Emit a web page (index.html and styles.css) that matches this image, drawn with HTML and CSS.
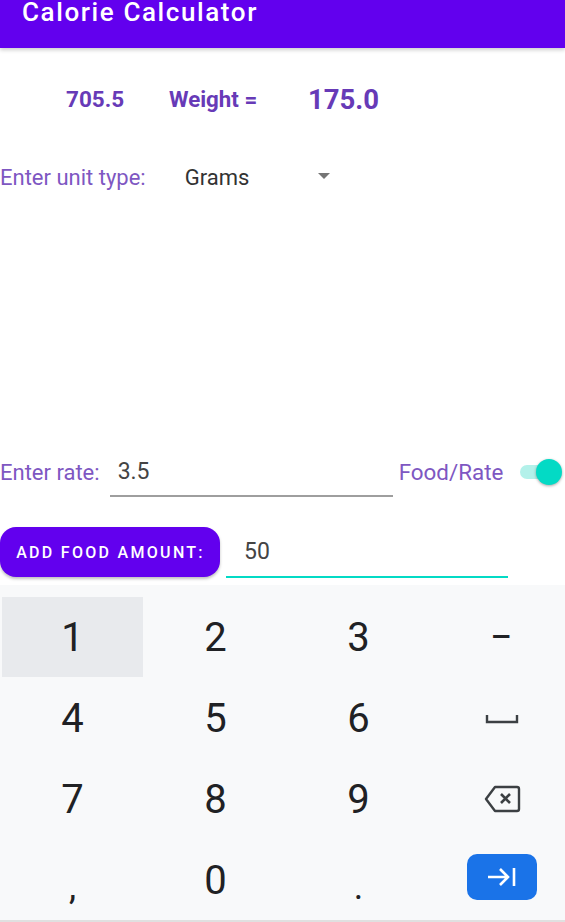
FILE: index.html
```html
<!DOCTYPE html>
<html>
<head>
<meta charset="utf-8">
<link rel="stylesheet" href="styles.css">
</head>
<body>
<div class="app">
  <header class="appbar"><span class="title">Calorie Calculator</span></header>
  <div class="totals">
    <span class="cal">705.5</span>
    <span class="wlabel">Weight =</span>
    <span class="wval">175.0</span>
  </div>
  <div class="unit-row">
    <span class="label">Enter unit type:</span>
    <span class="select">Grams<span class="caret"></span></span>
  </div>
  <div class="rate-row">
    <span class="label">Enter rate:</span>
    <span class="field rate-field">3.5</span>
    <span class="label food">Food/Rate</span>
    <span class="switch"><span class="track"></span><span class="thumb"></span></span>
  </div>
  <div class="add-row">
    <button class="add-btn">ADD FOOD AMOUNT:</button>
    <span class="field amount-field">50</span>
  </div>
  <div class="keyboard">
    <div class="keys">
      <div class="key pressed">1</div>
      <div class="key">2</div>
      <div class="key">3</div>
      <div class="key sym">&minus;</div>
      <div class="key">4</div>
      <div class="key">5</div>
      <div class="key">6</div>
      <div class="key sym">
        <svg width="34" height="14" viewBox="0 0 34 14"><path d="M2 4 V11 H32 V4" fill="none" stroke="#3c4043" stroke-width="2.4"/></svg>
      </div>
      <div class="key">7</div>
      <div class="key">8</div>
      <div class="key">9</div>
      <div class="key sym">
        <svg width="38" height="30" viewBox="0 0 38 30"><path d="M12 3 H34 a2 2 0 0 1 2 2 V25 a2 2 0 0 1 -2 2 H12 L3 15 Z" fill="none" stroke="#3c4043" stroke-width="2.4" stroke-linejoin="round"/><path d="M18 10 L27 19 M27 10 L18 19" stroke="#3c4043" stroke-width="2.6"/></svg>
      </div>
      <div class="key small">,</div>
      <div class="key">0</div>
      <div class="key small">.</div>
      <div class="key"><span class="enter">
        <svg width="32" height="24" viewBox="0 0 32 24"><path d="M2 12 H22 M14 4 L22 12 L14 20 M28 3 V21" fill="none" stroke="#fff" stroke-width="2.6"/></svg>
      </span></div>
    </div>
  </div>
</div>
</body>
</html>
```
FILE: styles.css
```css
html, body {
  margin: 0;
  padding: 0;
  background: #fff;
}
body {
  font-family: Roboto, "Noto Sans", Arial, sans-serif;
  width: 565px;
  height: 922px;
  overflow: hidden;
}
.app {
  display: flex;
  flex-direction: column;
  height: 922px;
}
.appbar {
  height: 48px;
  flex: none;
  background: #6200ee;
  box-shadow: 0 2px 4px rgba(0,0,0,0.2);
  padding-left: 22px;
  box-sizing: border-box;
}
.title {
  color: #fff;
  font-size: 26px;
  font-weight: 500;
  line-height: 24px;
  letter-spacing: 1.6px;
  display: block;
}
.totals {
  display: flex;
  align-items: center;
  height: 28px;
  margin-top: 37px;
  color: #673ab7;
  font-weight: 700;
}
.cal {
  margin-left: 66px;
  font-size: 22.5px;
  width: 103px;
}
.wlabel {
  font-size: 22.3px;
  width: 139px;
}
.wval {
  font-size: 27.5px;
}
.unit-row {
  display: flex;
  align-items: center;
  height: 24px;
  margin-top: 52px;
}
.label {
  color: #7e57c2;
  font-size: 22px;
  white-space: nowrap;
  flex: none;
}
.select {
  display: flex;
  align-items: center;
  margin-left: 39px;
  color: #333;
  font-size: 22px;
}
.caret {
  margin-left: 69px;
  width: 0;
  height: 0;
  border-left: 6px solid transparent;
  border-right: 6px solid transparent;
  border-top: 6px solid #757575;
  margin-top: -2px;
}
.rate-row {
  display: flex;
  align-items: center;
  margin-top: 258px;
  height: 50px;
}
.field {
  box-sizing: border-box;
  color: #444;
  font-size: 23px;
  display: flex;
  align-items: center;
  flex: none;
}
.rate-field {
  margin-left: 10px;
  width: 283px;
  height: 50px;
  padding-left: 8px;
  border-bottom: 2px solid #9e9e9e;
}
.food {
  margin-left: 6px;
  font-size: 22.4px;
}
.switch {
  position: relative;
  flex: none;
  width: 42px;
  height: 28px;
  margin-left: 17px;
}
.track {
  position: absolute;
  left: 0;
  top: 7px;
  width: 38px;
  height: 14px;
  border-radius: 7px;
  background: #b3f1ea;
}
.thumb {
  position: absolute;
  left: 16px;
  top: 1px;
  width: 26px;
  height: 26px;
  border-radius: 50%;
  background: #03dac5;
  box-shadow: 0 1px 3px rgba(0,0,0,0.35);
}
.add-row {
  display: flex;
  align-items: flex-start;
  margin-top: 30px;
}
.add-btn {
  font-family: Roboto, "Noto Sans", Arial, sans-serif;
  background: #6200ee;
  color: #fff;
  border: none;
  border-radius: 16px;
  width: 220px;
  height: 50px;
  flex: none;
  font-size: 16px;
  font-weight: 500;
  letter-spacing: 2.3px;
  padding: 0 0 0 1px;
  white-space: nowrap;
  box-shadow: 0 2px 3px rgba(0,0,0,0.25);
}
.amount-field {
  margin-left: 6px;
  width: 282px;
  padding-left: 18px;
  border-bottom: 2px solid #03dac5;
  height: 51px;
}
.keyboard {
  margin-top: 7px;
  flex: 1;
  background: #f8f9fa;
  border-bottom: 2px solid #e0e0e0;
  overflow: hidden;
  padding: 12px 0 0 2px;
}
.keys {
  display: grid;
  grid-template-columns: repeat(4, 141px);
  grid-auto-rows: 80px;
  column-gap: 2px;
  row-gap: 1px;
}
.key {
  display: flex;
  align-items: center;
  justify-content: center;
  font-size: 40px;
  color: #202124;
}
.key.pressed {
  background: #e8eaed;
}
.key.small {
  font-size: 36px;
  padding-top: 14px;
  box-sizing: border-box;
}
.enter {
  width: 70px;
  height: 46px;
  border-radius: 10px;
  background: #1a73e8;
  display: flex;
  align-items: center;
  justify-content: center;
  margin-top: -6px;
}
```
